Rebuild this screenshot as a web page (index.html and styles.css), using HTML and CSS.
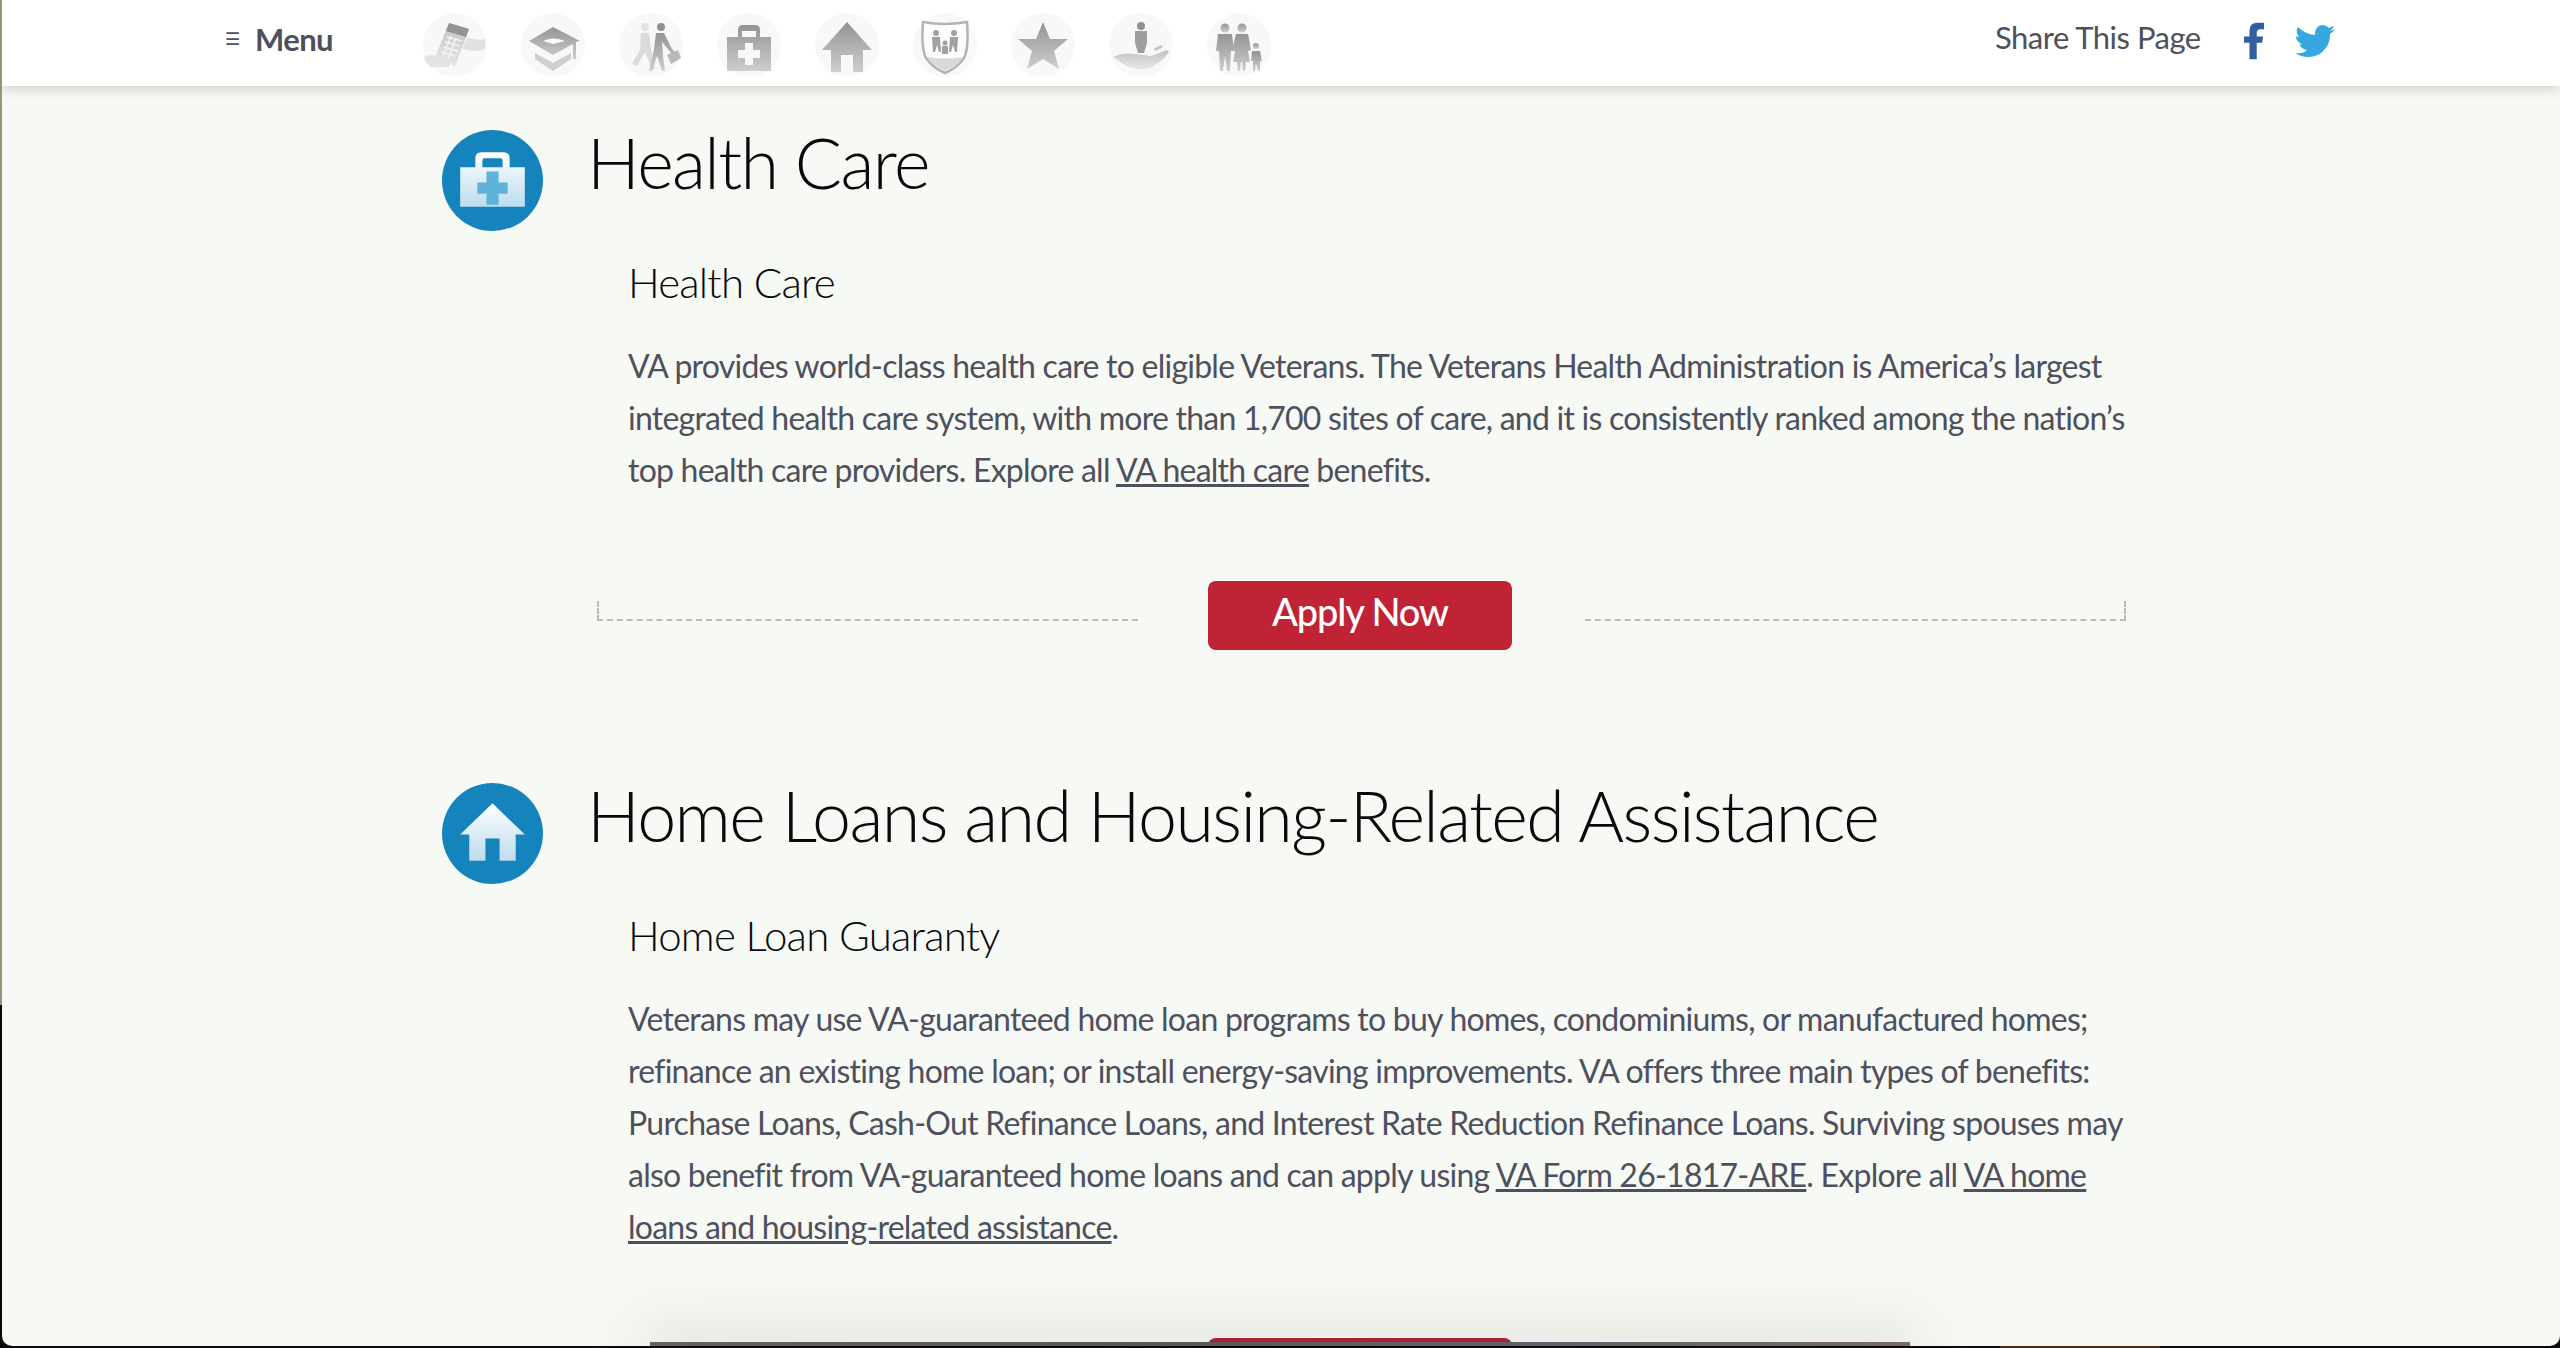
FILE: index.html
```html
<!DOCTYPE html>
<html lang="en">
<head>
<meta charset="utf-8">
<title>VA Benefits</title>
<link rel="stylesheet" href="styles.css">
</head>
<body>
<svg class="defs" width="0" height="0" aria-hidden="true">
  <defs>
    <linearGradient id="grey" x1="0" y1="0" x2="0" y2="1"><stop offset="0" stop-color="#7c7c7c"/><stop offset="1" stop-color="#c4c4c4"/></linearGradient>
    <linearGradient id="white" x1="0" y1="0" x2="0" y2="1"><stop offset="0" stop-color="#ffffff"/><stop offset="1" stop-color="#bcdcee"/></linearGradient>
    <linearGradient id="lightgrey" x1="0" y1="0" x2="0" y2="1"><stop offset="0" stop-color="#b4b4b4"/><stop offset="1" stop-color="#e6e6e6"/></linearGradient>
  </defs>
</svg>
<div class="edge"></div>
<div class="under-strip"></div>
<div class="window">
  <header class="topbar">
    <div class="menu"><span class="burger">☰</span><span>Menu</span></div>
    <nav class="icons">
      <span class="nav-icon"><svg viewBox="0 0 64 64"><path d="M44 24q10 4 18 2v10q-10 4-22 0z" fill="#dcdcdc"/><path d="M26 10l20 6-14 38-19-12z" fill="url(#lightgrey)"/><path d="M26 10l20 6-3 8-20-6z" fill="#7a7a7a"/><path d="M24 24l15 4M22 29l15 4M20 34l15 4M18 39l14 4M28 23l-9 22M33 25l-9 23" stroke="#f2f2f2" stroke-width="1.6" fill="none"/><path d="M1 44q9-4 17 0l10 2-2 8H8q-6-4-7-10z" fill="#dedede"/></svg></span>
      <span class="nav-icon"><svg viewBox="0 0 64 64"><path d="M32 14L8 28l24 14 20-11v15h3V29l4-1z" fill="url(#grey)"/><path d="M14 40l18 10 18-10v6L32 58 14 46z" fill="#c4c4c4"/><path d="M22 28q10-5 22 0l-12 3z" fill="#fff"/></svg></span>
      <span class="nav-icon"><svg viewBox="0 0 64 64"><circle cx="26" cy="14" r="4" fill="#ddd"/><path d="M22 20h8l2 16 4 20h-3l-7-17-8 14-5-2 8-14z" fill="#d4d4d4"/><circle cx="42" cy="14" r="4" fill="#777"/><path d="M37 20h8l8 16 3 3-3 2-10-12 1 14 2 15h-3l-5-15-5 15h-3l5-22z" fill="url(#grey)"/><path d="M48 42l11-5 3 8-10 6z" fill="#aaa"/></svg></span>
      <span class="nav-icon"><svg viewBox="0 0 64 64"><path fill-rule="evenodd" d="M10 24h11v-7q0-5 5-5h12q5 0 5 5v7h11v34H10zM25 24h14v-6H25zM28 30v7h-7v8h7v7h8v-7h7v-8h-7v-7z" fill="url(#grey)"/></svg></span>
      <span class="nav-icon"><svg viewBox="0 0 64 64"><path d="M32 9l25 28h-9v22H38V42H26v17H16V37H7z" fill="url(#grey)"/></svg></span>
      <span class="nav-icon"><svg viewBox="0 0 64 64"><path d="M10 9q22 4 44 0 2 26-3 36-7 10-19 15-12-5-19-15-5-10-3-36z" fill="#fff" stroke="#a4a4a4" stroke-width="2.5"/><path d="M14 44q18 3 36 0-5 8-18 14-13-6-18-14z" fill="#d2d2d2"/><g fill="#8c8c8c"><circle cx="23" cy="20" r="3"/><circle cx="41" cy="20" r="3"/><path d="M19 24h8l1 15h-2l-2-7-2 7h-2zM37 24h8l-1 15h-2l-2-7-2 7h-2z"/><circle cx="32" cy="30" r="2.5"/><path d="M29 33h6v8h-6z"/></g></svg></span>
      <span class="nav-icon"><svg viewBox="0 0 64 64"><path d="M32 9l7 17h18L43 38l5 18-16-10-16 10 5-18L7 26h18z" fill="url(#grey)"/></svg></span>
      <span class="nav-icon"><svg viewBox="0 0 64 64"><circle cx="32" cy="13" r="4" fill="#777"/><path d="M26 18h12v12l-3 10h-6l-3-10z" fill="#888"/><path d="M4 44q10-5 22-3l16 2 16-6 2 2q-8 12-22 17-14 2-24-5z" fill="url(#lightgrey)"/><path d="M44 36l8-4 2 2-7 4z" fill="#bbb"/></svg></span>
      <span class="nav-icon"><svg viewBox="0 0 64 64"><g fill="url(#grey)"><circle cx="18" cy="15" r="4.5"/><path d="M11 21h14l2 17h-3l-1 20h-3l-2-15-2 15h-3l-1-20H9z"/><circle cx="35" cy="15" r="4.5"/><path d="M29 21h12l3 16-3 1 2 11h-4l-1 9h-2l-1-9h-1l-1 9h-2l-1-9h-4l2-11-3-1z"/><circle cx="49" cy="33" r="3"/><path d="M45 38h8l2 10h-2v10h-2l-2-8-1 8h-2v-10h-2z"/></g></svg></span>
    </nav>
    <div class="share">
      <span class="share-label">Share This Page</span>
      <svg class="fb" viewBox="0 0 22 40"><path d="M6 40V22H0v-7h6v-6q0-9 9-9h7v7h-4q-4 0-4 4v4h7l-1 7h-6v18z" fill="#2f5f9f"/></svg>
      <svg class="tw" viewBox="0 0 40 33"><path d="M40 4q-2 1-5 2 3-2 4-5-3 1-5 2-3-3-6-3-7 0-8 8v2Q10 9 3 2 0 7 4 12q-2 0-3-1 0 6 6 8-2 1-3 0 2 5 8 6-4 4-12 3 6 4 13 4 11 0 17-8 5-6 5-14v-1q3-2 5-5z" fill="#35a9df"/></svg>
    </div>
  </header>

  <main class="content">
    <section class="benefit">
      <div class="benefit-head">
        <span class="badge"><svg viewBox="0 0 100 100"><circle cx="50" cy="50" r="50" fill="#1583bc"/><path fill-rule="evenodd" d="M18 37h15v-9q0-6 6-6h22q6 0 6 6v9h15v39H18zM40 37h20v-7q0-2-2-2H42q-2 0-2 2z" fill="url(#white)"/><path d="M44 41h12v11h9v11h-9v11H44V63h-9V52h9z" fill="#5fb3d9"/></svg></span>
        <h2>Health Care</h2>
      </div>
      <div class="benefit-body">
        <h3>Health Care</h3>
        <p>VA provides world-class health care to eligible Veterans. The Veterans Health Administration is America’s largest integrated health care system, with more than 1,700 sites of care, and it is consistently ranked among the nation’s top health care providers. Explore all <a href="#">VA health care</a> benefits.</p>
      </div>
      <div class="apply-row">
        <span class="rule"></span>
        <a class="apply" href="#">Apply Now</a>
        <span class="rule"></span>
      </div>
    </section>

    <section class="benefit">
      <div class="benefit-head">
        <span class="badge"><svg viewBox="0 0 100 100"><circle cx="50" cy="50" r="50" fill="#1583bc"/><path d="M50 20l32 31h-9v26H57V55H43v22H27V51h-9z" fill="url(#white)"/></svg></span>
        <h2>Home Loans and Housing-Related Assistance</h2>
      </div>
      <div class="benefit-body">
        <h3>Home Loan Guaranty</h3>
        <p>Veterans may use VA-guaranteed home loan programs to buy homes, condominiums, or manufactured homes; refinance an existing home loan; or install energy-saving improvements. VA offers three main types of benefits: Purchase Loans, Cash-Out Refinance Loans, and Interest Rate Reduction Refinance Loans. Surviving spouses may also benefit from VA-guaranteed home loans and can apply using <a href="#">VA Form 26-1817-ARE</a>. Explore all <a href="#">VA home loans and housing-related assistance</a>.</p>
      </div>
    </section>
  </main>
  <div class="dock"></div>
  <div class="apply apply-peek"></div>
</div>
</body>
</html>
```

FILE: styles.css
```css
* { box-sizing: border-box; }
html, body { margin: 0; padding: 0; height: 100%; background: #0b0808; overflow: hidden; }
body { font-family: "Lato", "Open Sans", sans-serif; color: #4e505e; position: relative; }
.defs { position: absolute; }
.edge { position: absolute; left: 0; top: 0; width: 2px; height: 1005px; background: #94967c; }
.under-strip { position: absolute; left: 2000px; top: 1346px; width: 160px; height: 2px; background: #4a2a1c; }
.window { position: relative; width: 2558px; height: 1346px; margin-left: 2px; background: #f7f9f4; border-radius: 0 0 10px 10px; overflow: hidden; }

.topbar { height: 86px; background: #fff; box-shadow: 0 2px 12px rgba(90, 95, 85, .3); display: flex; align-items: flex-start; position: relative; z-index: 2; }
.menu { width: 421px; padding: 21px 0 0 223px; display: flex; align-items: center; gap: 15px; font-size: 31px; font-weight: 700; letter-spacing: -.6px; line-height: 36px; flex: none; }
.burger { font-size: 17px; font-weight: 400; letter-spacing: 0; }
.icons { display: flex; gap: 34px; padding-top: 13px; flex: none; }
.nav-icon { width: 64px; height: 64px; border-radius: 50%; background: #f8f8f8; display: block; }
.nav-icon svg { display: block; width: 64px; height: 64px; opacity: .8; filter: blur(.6px); }
.share { margin-left: auto; margin-right: 222px; width: 343px; padding-top: 17px; display: flex; align-items: flex-start; flex: none; }
.share-label { font-size: 31px; line-height: 40px; letter-spacing: -.5px; width: 249px; flex: none; }
.fb { width: 20px; height: 40px; margin-top: 4px; }
.tw { width: 40px; height: 33px; margin: 8px 0 0 31px; }

.content { width: 1700px; margin-left: 440px; padding-top: 44px; }
.benefit { height: 653px; }
.benefit-head { display: flex; align-items: flex-start; gap: 44px; height: 126px; }
.badge { width: 101px; height: 101px; flex: none; }
.badge svg { display: block; width: 101px; height: 101px; }
h2 { margin: -8px 0 0; font-size: 70px; font-weight: 300; line-height: 80px; color: #07090d; letter-spacing: -1.6px; }
.benefit-body { margin-left: 186px; width: 1515px; }
h3 { margin: 0; font-size: 42px; font-weight: 300; line-height: 52px; color: #07090d; padding-bottom: 32px; letter-spacing: -.8px; }
p { margin: 0; font-size: 32px; line-height: 52px; letter-spacing: -.76px; color: #4e505e; }
a { color: inherit; }

.apply-row { display: flex; align-items: flex-start; margin: 84px 0 0 155px; width: 1528px; }
.rule { flex: none; width: 541px; height: 20px; margin-top: 21px; border-bottom: 2px dashed #bcbcb4; border-left: 2px dashed #bcbcb4; }
.rule:last-child { margin-left: 73px; border-left: 0; border-right: 2px dashed #bcbcb4; }
.apply { display: block; flex: none; margin-left: 70px; width: 304px; height: 70px; line-height: 60px; border-radius: 8px; background: #c02335; border-top: 1px solid #fff; color: #fff; font-size: 38px; font-weight: 500; letter-spacing: -1.1px; text-align: center; text-decoration: none; }
.apply-peek { position: absolute; left: 1206px; top: 1337px; margin: 0; z-index: 3; background: #b01f33; }
.dock { position: absolute; left: 648px; top: 1342px; width: 1260px; height: 8px; background: linear-gradient(90deg, #6b5f5f, #585858 40%, #5f6173 70%, #7b6a60); box-shadow: 0 0 60px 12px rgba(60, 65, 50, .16); z-index: 4; }
```
